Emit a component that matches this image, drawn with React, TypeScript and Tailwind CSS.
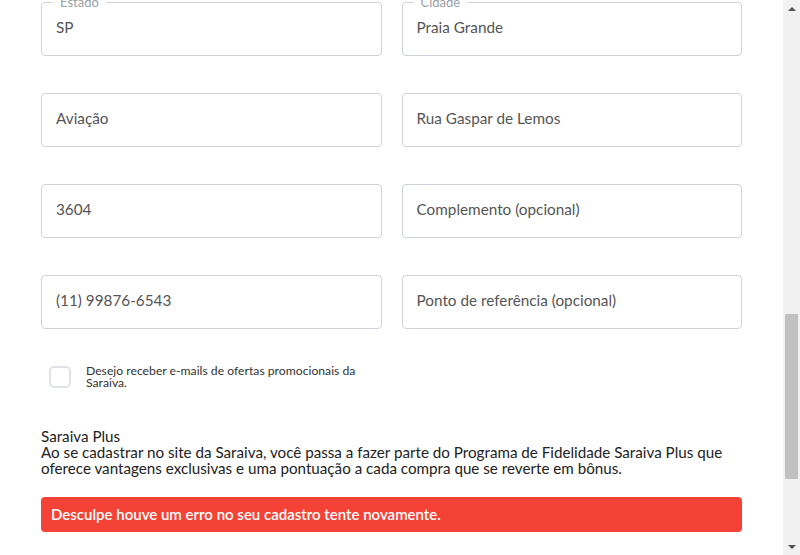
import React from 'react';

type FieldProps = { value: string; label?: string };

const Field: React.FC<FieldProps> = ({ value, label }) => (
    <div className="relative h-[54px] rounded-[4px] border border-[#ced4da] bg-white px-[14px] pb-[3px] flex items-center">
        {label && (
            <span className="absolute -top-[8px] left-[11px] bg-white px-[7px] text-[13px] leading-[14px] text-[#9aa0a6]">
                {label}
            </span>
        )}
        <span className="text-[15.3px] text-[#555]">{value}</span>
    </div>
);

const fields: FieldProps[] = [
    { value: 'SP', label: 'Estado' },
    { value: 'Praia Grande', label: 'Cidade' },
    { value: 'Aviação' },
    { value: 'Rua Gaspar de Lemos' },
    { value: '3604' },
    { value: 'Complemento (opcional)' },
    { value: '(11) 99876-6543' },
    { value: 'Ponto de referência (opcional)' },
];

const App: React.FC = () => {
    return (
        <div className="flex h-screen overflow-hidden bg-white font-['Lato',sans-serif]">
            <div className="flex-1 overflow-hidden">
                <div className="mx-[41px] pt-[2px]">
                    <div className="grid grid-cols-2 gap-x-[20px] gap-y-[37px]">
                        {fields.map((f) => (
                            <Field key={f.value} {...f} />
                        ))}
                    </div>

                    <div className="mt-[36px] flex items-center pl-[8px]">
                        <div className="h-[22px] w-[22px] shrink-0 rounded-[5px] border-2 border-[#dfe3e8] bg-white" />
                        <p className="ml-[15px] w-[280px] text-[12.2px] leading-[12px] text-[#333]">
                            Desejo receber e-mails de ofertas promocionais da Saraiva.
                        </p>
                    </div>

                    <div className="mt-[39px] text-[15.2px] leading-[16px] text-[#222]">
                        <p>Saraiva Plus</p>
                        <p>
                            Ao se cadastrar no site da Saraiva, você passa a fazer parte do Programa de Fidelidade Saraiva Plus que oferece vantagens exclusivas e uma pontuação a cada compra que se reverte em bônus.
                        </p>
                    </div>

                    <div className="mt-[21px] flex h-[35px] items-center rounded-[4px] bg-[#f44336] px-[10px] text-[15px] font-semibold text-white">
                        Desculpe houve um erro no seu cadastro tente novamente.
                    </div>
                </div>
            </div>

            {/* barra de rolagem */}
            <div className="flex w-[17px] shrink-0 flex-col items-center bg-[#f1f1f1]">
                <div className="flex h-[17px] items-center justify-center">
                    <div className="h-0 w-0 border-x-[4px] border-b-[4px] border-x-transparent border-b-[#505050]" />
                </div>
                <div className="flex-1 w-full px-[2px] pt-[297px]">
                    <div className="h-[165px] w-full bg-[#c1c1c1]" />
                </div>
                <div className="flex h-[17px] items-center justify-center">
                    <div className="h-0 w-0 border-x-[4px] border-t-[4px] border-x-transparent border-t-[#505050]" />
                </div>
            </div>
        </div>
    );
};

export default App;
